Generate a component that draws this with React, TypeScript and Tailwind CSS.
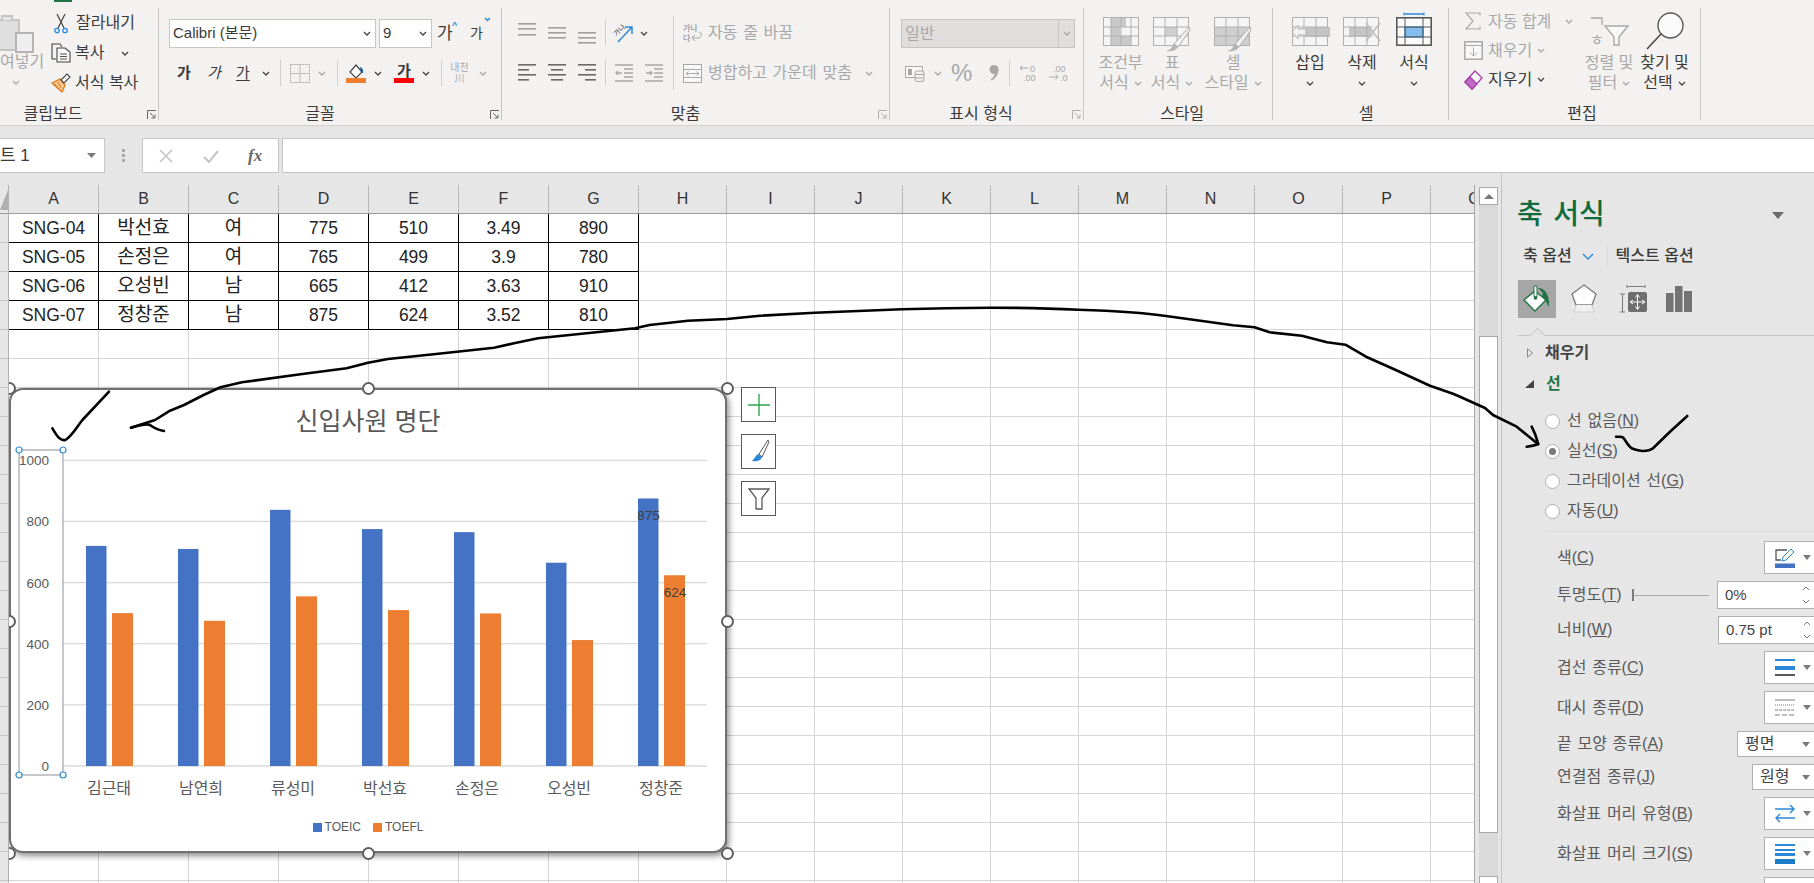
import type { ReactNode } from 'react';

const COLUMNS = ['A', 'B', 'C', 'D', 'E', 'F', 'G', 'H', 'I', 'J', 'K', 'L', 'M', 'N', 'O', 'P', 'Q'];

const TABLE = [
  ['SNG-04', '박선효', '여', '775', '510', '3.49', '890'],
  ['SNG-05', '손정은', '여', '765', '499', '3.9', '780'],
  ['SNG-06', '오성빈', '남', '665', '412', '3.63', '910'],
  ['SNG-07', '정창준', '남', '875', '624', '3.52', '810'],
];

const SCORES = [
  { name: '김근태', toeic: 720, toefl: 500 },
  { name: '남연희', toeic: 710, toefl: 475 },
  { name: '류성미', toeic: 838, toefl: 555 },
  { name: '박선효', toeic: 775, toefl: 510 },
  { name: '손정은', toeic: 765, toefl: 499 },
  { name: '오성빈', toeic: 665, toefl: 412 },
  { name: '정창준', toeic: 875, toefl: 624 },
];

const TICKS = [1000, 800, 600, 400, 200, 0];
const ROW_COUNT = 24;

// ---- small shared bits ----

function Chev({ light }: { light?: boolean }) {
  return (
    <svg viewBox="0 0 8 5" className="w-2 h-[5px] shrink-0">
      <path d="M1 1l3 3 3-3" fill="none" stroke={light ? '#a8a8a8' : '#444444'} strokeWidth="1.3" />
    </svg>
  );
}

function Launcher({ light }: { light?: boolean }) {
  const c = light ? '#b0b0b0' : '#666666';
  return (
    <svg viewBox="0 0 10 10" className="absolute right-[1px] bottom-0 w-[10px] h-[10px]">
      <path d="M.5 9V.5H9" fill="none" stroke={c} />
      <path d="M3 3l5 5M8 4.5V8H4.500" fill="none" stroke={c} />
    </svg>
  );
}

function Group({
  className,
  label,
  launcher,
  lightLauncher,
  labelClassName = '',
  children,
}: {
  className: string;
  label: string;
  launcher?: boolean;
  lightLauncher?: boolean;
  labelClassName?: string;
  children: ReactNode;
}) {
  return (
    <div className={`relative h-[112px] shrink-0 border-r border-[#c8c6c4] ${className}`}>
      <div className="flex h-[95px]">{children}</div>
      <div className={`h-[17px] leading-[22px] text-center text-[16px] text-[#3b3a39] ${labelClassName}`}>{label}</div>
      {launcher && <Launcher light={lightLauncher} />}
    </div>
  );
}

function BigButton({
  icon,
  line1,
  line2,
  className,
  light,
}: {
  icon: ReactNode;
  line1: string;
  line2?: string;
  className: string;
  light?: boolean;
}) {
  return (
    <div className={`flex flex-col items-center pt-[9px] text-[16px] leading-[20px] whitespace-nowrap ${light ? 'text-[#a8a8a8]' : 'text-[#3b3a39]'} ${className}`}>
      <div className="h-[36px] flex justify-center">{icon}</div>
      <div>{line1}</div>
      <div className="h-[20px] flex items-center gap-[5px]">
        {line2 && <span>{line2}</span>}
        <Chev light={light} />
      </div>
    </div>
  );
}

function Lines({ rows, color, className }: { rows: [number, number, number][]; color: string; className: string }) {
  return (
    <svg viewBox="0 0 18 24" className={`w-[18px] h-[24px] shrink-0 ${className}`}>
      {rows.map(([a, b, y]) => (
        <rect key={`${a}-${y}`} x={a} y={y} width={b - a} height="1.6" fill={color} />
      ))}
    </svg>
  );
}

// ---- ribbon icons ----

function PasteIcon() {
  return (
    <svg viewBox="0 0 34 40" className="w-[34px] h-[40px]">
      <rect x="-6" y="7" width="25" height="30" fill="#dedede" stroke="#c4c4c4" strokeWidth="2" />
      <path d="M2 7V3h10v4" fill="#e8e8e8" stroke="#c4c4c4" strokeWidth="2" />
      <rect x="16" y="20" width="17" height="19" fill="#eeeeee" stroke="#b4b4b4" strokeWidth="2" />
    </svg>
  );
}

function ScissorsIcon() {
  return (
    <svg viewBox="0 0 14 21" className="w-[14px] h-[21px] shrink-0">
      <path d="M3 1l7 14M11 1L4 15" stroke="#444444" strokeWidth="1.2" fill="none" />
      <circle cx="3" cy="17.500" r="2.200" fill="none" stroke="#2b88d8" strokeWidth="1.300" />
      <circle cx="11" cy="17.500" r="2.200" fill="none" stroke="#2b88d8" strokeWidth="1.300" />
    </svg>
  );
}

function CopyIcon() {
  return (
    <svg viewBox="0 0 20 20" className="w-5 h-5 shrink-0">
      <path d="M5 16H1V1h8l2 3" fill="none" stroke="#444444" strokeWidth="1.100" />
      <path d="M6 5h8l5 4v10H6z" fill="#f8f8f8" stroke="#444444" strokeWidth="1.100" />
      <path d="M9 11h7M9 13.500h7M9 16h7" stroke="#555555" />
    </svg>
  );
}

function PainterIcon() {
  return (
    <svg viewBox="0 0 20 20" className="w-5 h-5 shrink-0">
      <path d="M1 10l8-4 5 6-3 7z" fill="#f7c58f" stroke="#e07a1f" strokeWidth="1.300" />
      <path d="M4 11l3 5M7 9l3 6" stroke="#e07a1f" />
      <path d="M10 7l6-6 3 3-6 6z" fill="#fff" stroke="#444444" strokeWidth="1.100" />
    </svg>
  );
}

function BordersIcon() {
  return (
    <svg viewBox="0 0 20 19" className="w-5 h-[19px]">
      <rect x=".5" y=".5" width="19" height="18" fill="none" stroke="#a8a8a8" strokeDasharray="2 1" />
      <path d="M10 0v19M0 9.500h20" stroke="#bcbcbc" />
    </svg>
  );
}

function FillIcon() {
  return (
    <svg viewBox="0 0 20 19" className="w-5 h-[19px]">
      <path d="M10 1l6 7-6 6-6-6z" fill="#fff" stroke="#444444" strokeWidth="1.200" />
      <path d="M14 3c3 1 3.500 4 3 6l-2-1" fill="#0f5c9e" />
      <rect x="0" y="14" width="20" height="5" fill="#ed7d31" />
    </svg>
  );
}

function CondIcon() {
  return (
    <svg viewBox="0 0 36 29" className="w-[36px] h-[29px]">
      <rect x=".5" y=".5" width="35" height="28" fill="#f5f5f5" stroke="#b0b0b0" />
      <rect x="8" y="1" width="15" height="9" fill="#c9c9c9" />
      <rect x="8" y="10" width="9" height="9" fill="#c9c9c9" />
      <rect x="8" y="19" width="20" height="9" fill="#c9c9c9" />
      <path d="M8 0v29M18 0v29M28 0v29M0 10h36M0 19h36" stroke="#b0b0b0" />
    </svg>
  );
}

function TableIcon({ body }: { body?: boolean }) {
  return (
    <svg viewBox="0 0 38 40" className="w-[38px] h-[40px]">
      <rect x=".5" y=".5" width="35" height="28" fill="#f5f5f5" stroke="#b0b0b0" />
      {body ? (
        <rect x="1" y="10" width="34" height="18" fill="#cfcfcf" />
      ) : (
        <rect x="12" y="10" width="12" height="9" fill="#cfcfcf" />
      )}
      <path d="M12 0v29M24 0v29M0 10h36M0 19h36" stroke="#b0b0b0" />
      <path d="M36 10L21 27l4 3 12-17z" fill="#f3f2f1" stroke="#a8a8a8" />
      <path d="M20 27c-1 4-3 6-7 7 4 1 10 0 12-4z" fill="#b4b4b4" />
    </svg>
  );
}

function InsertIcon() {
  return (
    <svg viewBox="0 0 40 29" className="w-[40px] h-[29px]">
      <rect x="2.500" y=".5" width="35" height="28" fill="#f5f5f5" stroke="#b0b0b0" />
      <rect x="16" y="10" width="24" height="10" fill="#c4c4c4" />
      <path d="M14 0v29M26 0v29M2 10h36M2 19h36" stroke="#b0b0b0" />
      <path d="M8 8l-6 7 6 7v-4h8v-6H8z" fill="#f3f2f1" stroke="#b0b0b0" />
    </svg>
  );
}

function DeleteIcon() {
  return (
    <svg viewBox="0 0 38 29" className="w-[38px] h-[29px]">
      <rect x=".5" y=".5" width="35" height="28" fill="#f5f5f5" stroke="#b0b0b0" />
      <rect x="6" y="10" width="22" height="10" fill="#c4c4c4" />
      <path d="M12 0v29M24 0v29M0 10h30M0 19h30" stroke="#b0b0b0" />
      <path d="M23 6l14 18M37 6L23 24" stroke="#bdbdbd" strokeWidth="1.600" />
    </svg>
  );
}

function FormatIcon() {
  return (
    <svg viewBox="0 0 36 34" className="w-[36px] h-[34px] -mt-[5px]">
      <path d="M8 2h20" stroke="#2b88d8" strokeWidth="1.500" />
      <path d="M8 .5v3M28 .5v3" stroke="#2b88d8" />
      <rect x=".8" y="5.800" width="34.400" height="27.400" fill="#fbfbfb" stroke="#595959" strokeWidth="1.600" />
      <rect x="9" y="15" width="18" height="10" fill="#83bdec" stroke="#106ebe" />
      <path d="M9 5v28M27 5v28M0 15h36M0 25h36" stroke="#595959" />
    </svg>
  );
}

function SortIcon() {
  return (
    <svg viewBox="0 0 38 30" className="w-[38px] h-[30px] -mt-px overflow-visible">
      <path d="M1 2h11v7" fill="none" stroke="#a8a8a8" strokeWidth="1.300" />
      <text x="0" y="29" className="text-[15px] fill-[#a8a8a8]">ㅎ</text>
      <path d="M15 10h23l-9 11v8h-5v-8z" fill="#f8f8f8" stroke="#a8a8a8" strokeWidth="1.400" />
    </svg>
  );
}

function FindIcon() {
  return (
    <svg viewBox="0 0 38 38" className="w-[38px] h-[38px] -mt-[5px]">
      <circle cx="24.500" cy="13.500" r="12.500" fill="#fbfbfb" stroke="#595959" strokeWidth="1.400" />
      <path d="M15 22L1 37" stroke="#444444" strokeWidth="1.500" />
    </svg>
  );
}

function StrokePen({ d, w, h, className = '' }: { d: string; w: number; h: number; className?: string }) {
  return (
    <svg viewBox={`0 0 ${w} ${h}`} width={w} height={h} className={`shrink-0 ${className}`}>
      <path d={d} fill="none" stroke="#a8a8a8" strokeWidth="1.200" />
    </svg>
  );
}

// ---- ribbon ----

function Ribbon() {
  return (
    <div className="relative h-[126px] shrink-0 bg-[#f3f2f1] border-b border-[#d2d0ce] pt-[8px] flex">
      <div className="absolute left-[54px] top-0 w-[18px] h-[2px] bg-[#217346]" />

      <Group className="-ml-[32px] w-[191px]" label="클립보드" launcher labelClassName="pr-[20px]">
        <div className="w-[86px] flex flex-col items-start pt-[5px] pl-[32px] text-[16px] text-[#a8a8a8] leading-[20px]">
          <div className="h-[40px]"><PasteIcon /></div>
          <div className="-mt-px whitespace-nowrap">여넣기</div>
          <div className="h-[20px] ml-[12px] flex items-center"><Chev light /></div>
        </div>
        <div className="flex flex-col text-[16px] text-[#3b3a39] ml-[-3px]">
          <div className="h-[30px] flex items-center gap-[8px] pl-[3px]"><ScissorsIcon />잘라내기</div>
          <div className="h-[30px] flex items-center gap-[4px]"><CopyIcon />복사<span className="ml-[13px]"><Chev /></span></div>
          <div className="h-[30px] flex items-center gap-[4px]"><PainterIcon />서식 복사</div>
        </div>
      </Group>

      <Group className="w-[343px] pl-[10px]" label="글꼴" launcher labelClassName="pr-[30px]">
        <div className="flex flex-col">
          <div className="mt-[11px] h-[29px] flex items-center text-[#3b3a39] text-[15px]">
            <div className="w-[207px] h-full bg-white border border-[#c8c6c4] flex items-center justify-between pl-[3px] pr-[4px]">
              Calibri (본문)<Chev />
            </div>
            <div className="ml-[3px] w-[53px] h-full bg-white border border-[#c8c6c4] flex items-center justify-between pl-[3px] pr-[4px]">
              9<Chev />
            </div>
            <div className="relative ml-[5px] w-[22px] text-[17px]">
              가<span className="absolute left-[15px] -top-[2px] text-[9px] font-bold text-[#2b88d8]">^</span>
            </div>
            <div className="relative ml-[11px] w-[20px] text-[14px]">
              가<span className="absolute left-[14px] -top-[6px]"><svg viewBox="0 0 7 5" className="w-[7px] h-[5px]"><path d="M1 1l2.500 2.500L6 1" fill="none" stroke="#2b88d8" strokeWidth="1.400" /></svg></span>
            </div>
          </div>
          <div className="mt-[12px] h-[26px] flex items-center text-[15px] text-[#3b3a39]">
            <span className="ml-[8px] w-[15px] font-bold">가</span>
            <span className="ml-[15px] w-[15px] italic">가</span>
            <span className="ml-[14px] w-[15px] underline underline-offset-2">가</span>
            <span className="ml-[11px]"><Chev /></span>
            <span className="ml-[10px] w-px h-[26px] bg-[#d2d0ce]" />
            <span className="ml-[9px]"><BordersIcon /></span>
            <span className="ml-[8px]"><Chev light /></span>
            <span className="ml-[11px] w-px h-[26px] bg-[#d2d0ce]" />
            <span className="ml-[8px]"><FillIcon /></span>
            <span className="ml-[8px]"><Chev /></span>
            <span className="ml-[12px] relative w-5 h-[19px] flex flex-col items-center">
              <span className="font-bold leading-[14px]">가</span>
              <span className="absolute bottom-0 left-0 w-5 h-[5px] bg-[#ff0000]" />
            </span>
            <span className="ml-[8px]"><Chev /></span>
            <span className="ml-[11px] w-px h-[26px] bg-[#d2d0ce]" />
            <span className="ml-[8px] w-[19px] flex flex-col items-center text-[10px] leading-[11px] text-[#a8a8a8]">
              <span>내천</span><span>川</span>
            </span>
            <span className="ml-[10px]"><Chev light /></span>
          </div>
        </div>
      </Group>

      <Group className="w-[388px]" label="맞춤" launcher lightLauncher labelClassName="pr-[20px]">
        <div className="mt-[8px] h-[74px] w-[172px] pl-[16px] pt-[5px] border-r border-[#d2d0ce] flex flex-col gap-[15px]">
          <div className="h-[24px] flex items-center">
            <Lines className="" color="#a0a0a0" rows={[[0, 18, 2], [0, 18, 7], [0, 18, 13]]} />
            <Lines className="ml-[12px]" color="#a0a0a0" rows={[[0, 18, 6], [0, 18, 11], [0, 18, 16]]} />
            <Lines className="ml-[12px]" color="#a0a0a0" rows={[[0, 18, 11], [0, 18, 16], [0, 18, 21]]} />
            <span className="ml-[9px] w-px h-[26px] bg-[#d2d0ce]" />
            <svg viewBox="0 0 22 20" className="ml-[6px] w-[22px] h-5 shrink-0 overflow-visible">
              <text x="1" y="11" transform="rotate(-45 6 8)" className="text-[7px] fill-[#444444]">가나</text>
              <path d="M6 19L20 4M13 4h7v7" fill="none" stroke="#2b88d8" strokeWidth="1.500" />
            </svg>
            <span className="ml-[6px]"><Chev /></span>
          </div>
          <div className="h-[26px] flex items-center">
            <Lines className="" color="#6a6a6a" rows={[[0, 18, 3], [0, 11, 8], [0, 18, 13], [0, 11, 18]]} />
            <Lines className="ml-[12px]" color="#6a6a6a" rows={[[0, 18, 3], [3, 15, 8], [0, 18, 13], [3, 15, 18]]} />
            <Lines className="ml-[12px]" color="#6a6a6a" rows={[[0, 18, 3], [7, 18, 8], [0, 18, 13], [7, 18, 18]]} />
            <span className="ml-[9px] w-px h-[26px] bg-[#d2d0ce]" />
            <svg viewBox="0 0 18 18" className="ml-[9px] w-[18px] h-[18px] shrink-0">
              <path d="M0 1h18M9 5h9M9 9h9M9 13h9M0 17h18M7 9H1M3 7L1 9l2 2" fill="none" stroke="#a8a8a8" strokeWidth="1.300" />
            </svg>
            <svg viewBox="0 0 18 18" className="ml-[12px] w-[18px] h-[18px] shrink-0">
              <path d="M0 1h18M9 5h9M9 9h9M9 13h9M0 17h18M1 9h6M5 7l2 2-2 2" fill="none" stroke="#a8a8a8" strokeWidth="1.300" />
            </svg>
          </div>
        </div>
        <div className="mt-[8px] h-[74px] pl-[9px] pt-[5px] flex flex-col gap-[15px] text-[16px] text-[#a8a8a8] [word-spacing:0.08em]">
          <div className="h-[24px] flex items-center">
            <svg viewBox="0 0 20 20" className="w-5 h-5 shrink-0 overflow-visible">
              <text x="0" y="8" className="text-[8px] fill-[#a8a8a8] font-bold">가나</text>
              <text x="0" y="18" className="text-[8px] fill-[#a8a8a8] font-bold">다</text>
              <path d="M16 9c3 0 3 6 0 6h-6M12 12l-3 3 3 3" fill="none" stroke="#a8a8a8" />
            </svg>
            <span className="ml-[5px]">자동 줄 바꿈</span>
          </div>
          <div className="h-[26px] flex items-center">
            <svg viewBox="0 0 19 19" className="w-[19px] h-[19px] shrink-0">
              <rect x=".5" y=".5" width="18" height="18" fill="#f8f8f8" stroke="#a8a8a8" />
              <path d="M0 5.500h19M0 13.500h19" stroke="#a8a8a8" />
              <path d="M3 9.500h13M5.500 7.500l-2.500 2 2.500 2M13.500 7.500l2.500 2-2.500 2" fill="none" stroke="#a8a8a8" />
            </svg>
            <span className="ml-[6px]">병합하고 가운데 맞춤</span>
            <span className="ml-[13px]"><Chev light /></span>
          </div>
        </div>
      </Group>

      <Group className="w-[194px] pl-[11px]" label="표시 형식" launcher lightLauncher labelClassName="pr-[22px]">
        <div className="flex flex-col">
          <div className="mt-[11px] w-[174px] h-[29px] bg-[#dfdedc] border border-[#c8c6c4] flex items-center text-[16px] text-[#a8a8a8]">
            <span className="flex-1 pl-[3px]">일반</span>
            <span className="w-[16px] h-full border-l border-[#c8c6c4] flex items-center justify-center"><Chev light /></span>
          </div>
          <div className="mt-[12px] h-[26px] flex items-center text-[#a8a8a8]">
            <svg viewBox="0 0 20 17" className="ml-[4px] w-5 h-[17px] shrink-0">
              <rect x=".5" y="1.500" width="17" height="11" fill="#f8f8f8" stroke="#a8a8a8" />
              <rect x="3" y="4" width="4" height="6" fill="#a8a8a8" />
              <rect x="10" y="6" width="9" height="10.500" rx="2" fill="#f3f2f1" stroke="#a8a8a8" />
              <path d="M10 9.500h9M10 13h9" stroke="#a8a8a8" />
            </svg>
            <span className="ml-[9px]"><Chev light /></span>
            <span className="ml-[9px] w-[22px] text-[24px] leading-none">%</span>
            <svg viewBox="0 0 12 18" className="ml-[15px] w-3 h-[18px] shrink-0">
              <circle cx="6" cy="5.500" r="4.500" fill="#a8a8a8" />
              <path d="M10.500 5.500c0 5-3 9-7 11l-.7-1.300c2.500-1.700 4-4 4.200-6z" fill="#a8a8a8" />
            </svg>
            <span className="ml-[9px] w-px h-[26px] bg-[#d2d0ce]" />
            <svg viewBox="0 0 20 20" className="ml-[9px] w-5 h-5 shrink-0 overflow-visible">
              <text x="11" y="9" className="text-[9px] fill-[#a8a8a8]">0</text>
              <text x="4" y="18" className="text-[9px] fill-[#a8a8a8]">.00</text>
              <path d="M9 5H1M3.500 2.500L1 5l2.500 2.500" fill="none" stroke="#a8a8a8" />
            </svg>
            <svg viewBox="0 0 20 20" className="ml-[10px] w-5 h-5 shrink-0 overflow-visible">
              <text x="4" y="9" className="text-[9px] fill-[#a8a8a8]">.00</text>
              <text x="11" y="18" className="text-[9px] fill-[#a8a8a8]">.0</text>
              <path d="M0 14h9M6.500 11.500L9 14l-2.500 2.500" fill="none" stroke="#a8a8a8" />
            </svg>
          </div>
        </div>
      </Group>

      <Group className="w-[189px] pl-[8px]" label="스타일">
        <BigButton className="w-[57px]" light icon={<CondIcon />} line1="조건부" line2="서식" />
        <BigButton className="w-[46px]" light icon={<TableIcon />} line1="표" line2="서식" />
        <BigButton className="w-[66px] ml-[5px]" light icon={<TableIcon body />} line1="셀" line2="스타일" />
      </Group>

      <Group className="w-[176px] pl-[11px]" label="셀">
        <BigButton className="w-[52px]" icon={<InsertIcon />} line1="삽입" />
        <BigButton className="w-[52px]" icon={<DeleteIcon />} line1="삭제" />
        <BigButton className="w-[52px]" icon={<FormatIcon />} line1="서식" />
      </Group>

      <Group className="w-[252px] pl-[15px]" label="편집">
        <div className="w-[120px] flex flex-col text-[16px] text-[#a8a8a8] -mt-[1px]">
          <div className="h-[29px] flex items-center">
            <StrokePen w={19} h={19} d="M16 3.500V1H2l7 8-7 8h14v-2.500" />
            <span className="ml-[5px]">자동 합계</span>
            <span className="ml-[14px]"><Chev light /></span>
          </div>
          <div className="h-[29px] flex items-center">
            <svg viewBox="0 0 19 19" className="w-[19px] h-[19px] shrink-0">
              <rect x=".8" y=".8" width="17.400" height="17.400" fill="#f8f8f8" stroke="#a8a8a8" strokeWidth="1.500" />
              <path d="M0 4.500h19M9.500 6.500v8.500M6 11.500l3.500 3.500 3.500-3.500" fill="none" stroke="#a8a8a8" />
            </svg>
            <span className="ml-[5px]">채우기</span>
            <span className="ml-[5px]"><Chev light /></span>
          </div>
          <div className="h-[29px] flex items-center text-[#3b3a39]">
            <svg viewBox="0 0 19 20" className="w-[19px] h-5 shrink-0">
              <path d="M1 12L11 1l7 7L8 19z" fill="#fff" stroke="#a63ca8" strokeWidth="1.300" />
              <path d="M1 12l5-5 7 7-5 5z" fill="#c06cc4" stroke="#a63ca8" strokeWidth="1.300" />
            </svg>
            <span className="ml-[5px]">지우기</span>
            <span className="ml-[5px]"><Chev /></span>
          </div>
        </div>
        <BigButton className="w-[50px]" light icon={<SortIcon />} line1="정렬 및" line2="필터" />
        <BigButton className="w-[61px]" icon={<FindIcon />} line1="찾기 및" line2="선택" />
      </Group>
    </div>
  );
}

// ---- formula bar ----

function FormulaBar() {
  return (
    <div className="h-[47px] shrink-0 bg-[#e6e6e6] pt-[12px] flex text-[#3b3a39]">
      <div className="w-[105px] h-[35px] bg-white border border-l-0 border-[#c8c6c4] flex items-center justify-between pr-[8px]">
        <span className="text-[17px] whitespace-nowrap">트 1</span>
        <svg viewBox="0 0 9 5" className="w-[9px] h-[5px]"><path d="M0 0h9L4.500 5z" fill="#7a7a7a" /></svg>
      </div>
      <div className="w-[37px] flex flex-col items-center justify-center gap-[2px]">
        <span className="w-[3px] h-[3px] bg-[#a8a8a8]" />
        <span className="w-[3px] h-[3px] bg-[#a8a8a8]" />
        <span className="w-[3px] h-[3px] bg-[#a8a8a8]" />
      </div>
      <div className="w-[137px] h-[35px] bg-white border border-[#c8c6c4] flex items-center pl-[16px]">
        <svg viewBox="0 0 14 14" className="w-[14px] h-[14px]"><path d="M1 1l12 12M13 1L1 13" stroke="#c4c4c4" strokeWidth="1.600" /></svg>
        <svg viewBox="0 0 16 14" className="ml-[30px] w-4 h-[14px]"><path d="M1 8l5 5L15 2" fill="none" stroke="#c4c4c4" strokeWidth="2" /></svg>
        <span className="ml-[29px] font-['Liberation_Serif',serif] italic font-bold text-[17px] text-[#6a6a6a]">fx</span>
      </div>
      <div className="ml-[3px] flex-1 h-[35px] bg-white border border-r-0 border-[#c8c6c4]" />
    </div>
  );
}

// ---- chart ----

const BAR_SCALE = 0.3057;
const BASELINE = 313;

function ChartPlot() {
  const gridY = (v: number) => BASELINE - v * BAR_SCALE;
  return (
    <svg viewBox="0 0 714 356" className="w-[714px] h-[356px] overflow-visible shrink-0">
      {TICKS.map((t) => (
        <g key={t}>
          <line x1="52" x2="696" y1={gridY(t)} y2={gridY(t)} stroke="#d9d9d9" strokeWidth="1.300" />
          <text x="38" y={gridY(t) + 5} textAnchor="end" className="text-[13.5px] fill-[#595959]">{t}</text>
        </g>
      ))}
      {SCORES.map((s, i) => (
        <g key={s.name}>
          <rect x={75 + i * 92} y={BASELINE - s.toeic * BAR_SCALE} width="20.500" height={s.toeic * BAR_SCALE} fill="#4472c4" />
          <rect x={101 + i * 92} y={BASELINE - s.toefl * BAR_SCALE} width="21" height={s.toefl * BAR_SCALE} fill="#ed7d31" />
          <text x={98 + i * 92} y="341" textAnchor="middle" className="text-[16px] fill-[#595959]">{s.name}</text>
        </g>
      ))}
      <text x="637.500" y="67" textAnchor="middle" className="text-[13.5px] fill-[#404040]">875</text>
      <text x="664" y="144" textAnchor="middle" className="text-[13.5px] fill-[#404040]">624</text>
      <rect x="8" y="-3" width="44" height="325" fill="none" stroke="#a0a4ac" strokeWidth="1.200" />
      {[[8, -3], [52, -3], [8, 322], [52, 322]].map(([cx, cy]) => (
        <circle key={`${cx}-${cy}`} cx={cx} cy={cy} r="3" fill="#fff" stroke="#2b88d8" strokeWidth="1.200" />
      ))}
    </svg>
  );
}

const HANDLES = [
  'left-0 top-0',
  'left-[359px] top-0',
  'left-[718px] top-0',
  'left-0 top-[233px]',
  'left-[718px] top-[233px]',
  'left-0 top-[465px]',
  'left-[359px] top-[465px]',
  'left-[718px] top-[465px]',
];

function Chart() {
  return (
    <div className="absolute left-0 top-[203px] w-[718px] h-[465px]">
      <div className="w-full h-full bg-white rounded-[14px] border-2 border-[#707070] shadow-[2px_3px_6px_rgba(0,0,0,0.45)] flex flex-col">
        <div className="h-[63px] shrink-0 flex items-center justify-center text-[25px] text-[#595959]">신입사원 명단</div>
        <ChartPlot />
        <div className="mt-[9px] h-[18px] flex items-center justify-center text-[12px] text-[#595959]">
          <span className="w-[9px] h-[9px] bg-[#4472c4]" />
          <span className="ml-[3px]">TOEIC</span>
          <span className="ml-[12px] w-[9px] h-[9px] bg-[#ed7d31]" />
          <span className="ml-[3px]">TOEFL</span>
        </div>
      </div>
      {HANDLES.map((pos) => (
        <span key={pos} className={`absolute w-[13px] h-[13px] -ml-[6px] -mt-[6px] rounded-full bg-white border-2 border-[#5f5f5f] ${pos}`} />
      ))}
    </div>
  );
}

function ChartTools() {
  const box = 'w-[35px] h-[35px] bg-white border border-[#595959] flex items-center justify-center';
  return (
    <div className="absolute left-[732px] top-[202px] flex flex-col gap-[12px]">
      <div className={box}>
        <svg viewBox="0 0 22 22" className="w-[22px] h-[22px]"><path d="M11 0v22M0 11h22" stroke="#2fa84f" strokeWidth="1.400" /></svg>
      </div>
      <div className={box}>
        <svg viewBox="0 0 22 26" className="w-[22px] h-[26px]">
          <path d="M20 1l-9 14 3 3L21 3z" fill="#fff" stroke="#595959" />
          <path d="M10 15c-2 1-3 4-6 7 4 1 9 0 10-4z" fill="#2b88d8" />
        </svg>
      </div>
      <div className={box}>
        <svg viewBox="0 0 22 22" className="w-[22px] h-[22px]">
          <path d="M1 1h20l-7 9v11H8V10z" fill="#fff" stroke="#595959" strokeWidth="1.300" />
        </svg>
      </div>
    </div>
  );
}

// ---- sheet ----

function Sheet() {
  return (
    <div className="w-[1475px] shrink-0 flex pt-[12px] h-full">
      <div className="w-[9px] shrink-0 border-r border-[#b0b0b0]">
        <div className="h-[29px] border-b border-[#9b9b9b] flex items-end">
          <svg viewBox="0 0 8 20" className="w-2 h-5 mb-[3px]"><path d="M8 0v20H0z" fill="#b0b0b0" /></svg>
        </div>
        {Array.from({ length: ROW_COUNT }, (_, i) => (
          <div key={i} className="h-[29px] border-b border-[#c4c4c4]" />
        ))}
      </div>
      <div className="relative flex-1 min-w-0 overflow-hidden bg-white border-r border-[#a8a8a8]">
        <div className="flex h-[29px] bg-[#e6e6e6] border-b border-[#9b9b9b] text-[16px] text-[#333333]">
          {COLUMNS.map((c, i) => (
            <div
              key={c}
              className={`shrink-0 flex items-center justify-center border-r border-[#b8b8b8] ${i < 7 ? 'w-[90px]' : 'w-[88px]'}`}
            >
              {c}
            </div>
          ))}
        </div>
        {Array.from({ length: ROW_COUNT }, (_, r) => (
          <div key={r} className="flex h-[29px]">
            {COLUMNS.map((c, i) => {
              const inTable = r < TABLE.length && i < 7;
              const korean = i === 1 || i === 2;
              return (
                <div
                  key={c}
                  className={`shrink-0 flex items-center justify-center text-[#222222] border-r border-b ${korean ? 'text-[19px]' : 'text-[17.5px]'} ${i < 7 ? 'w-[90px]' : 'w-[88px]'} ${inTable ? 'border-black' : 'border-[#d4d4d4]'}`}
                >
                  {inTable ? TABLE[r][i] : null}
                </div>
              );
            })}
          </div>
        ))}
        <Chart />
        <ChartTools />
      </div>
    </div>
  );
}

function ScrollBar() {
  const btn = 'h-[18px] shrink-0 bg-white border border-[#a8a8a8] flex items-center justify-center';
  return (
    <div className="ml-[4px] w-[19px] shrink-0 mt-[14px] bg-[#dadada] flex flex-col">
      <div className={btn}>
        <svg viewBox="0 0 10 5" className="w-[10px] h-[5px]"><path d="M5 0l5 5H0z" fill="#7a7a7a" /></svg>
      </div>
      <div className="h-[131px] shrink-0" />
      <div className="h-[497px] shrink-0 bg-white border border-[#a8a8a8]" />
      <div className="h-[43px] shrink-0" />
      <div className={btn} />
    </div>
  );
}

// ---- format pane ----

function Radio({ label, keyLetter, checked }: { label: string; keyLetter: string; checked?: boolean }) {
  return (
    <div className="h-[30px] flex items-center text-[16px] text-[#595959]">
      <span className="ml-[43px] w-[15px] h-[15px] rounded-full bg-white border border-[#b0b0b0] flex items-center justify-center">
        {checked && <span className="w-[7px] h-[7px] rounded-full bg-[#7a7a7a]" />}
      </span>
      <span className="ml-[7px] [word-spacing:0.08em]">
        {label}(<u>{keyLetter}</u>)
      </span>
    </div>
  );
}

function Label({ text, keyLetter }: { text: string; keyLetter: string }) {
  return (
    <span className="text-[16px] text-[#595959] whitespace-nowrap [word-spacing:0.08em]">
      {text}(<u>{keyLetter}</u>)
    </span>
  );
}

function DownTriangle() {
  return (
    <svg viewBox="0 0 8 5" className="w-2 h-[5px] shrink-0"><path d="M0 0h8L4 5z" fill="#7a7a7a" /></svg>
  );
}

function IconRow({ text, keyLetter, children }: { text?: string; keyLetter?: string; children: ReactNode }) {
  return (
    <div className="h-[33px] flex items-center justify-between">
      {text && keyLetter ? <Label text={text} keyLetter={keyLetter} /> : <span />}
      <div className="w-[57px] h-[33px] bg-white border border-[#b0b0b0] flex items-center pl-[10px] gap-[8px]">
        {children}
        <DownTriangle />
      </div>
    </div>
  );
}

function SelectRow({ text, keyLetter, value, className }: { text: string; keyLetter: string; value: string; className: string }) {
  return (
    <div className="h-[26px] flex items-center justify-between">
      <Label text={text} keyLetter={keyLetter} />
      <div className={`h-[26px] bg-white border border-[#b0b0b0] flex items-center justify-between pl-[7px] pr-[10px] text-[16px] text-[#444444] ${className}`}>
        {value}
        <DownTriangle />
      </div>
    </div>
  );
}

function Spin({ value }: { value: string }) {
  return (
    <div className="w-[103px] h-[28px] bg-white border border-[#b0b0b0] flex items-center justify-between pl-[7px] pr-[9px] text-[15px] text-[#444444] shrink-0">
      {value}
      <svg viewBox="0 0 8 18" className="w-2 h-[18px]">
        <path d="M1 4l3-3 3 3M1 14l3 3 3-3" fill="none" stroke="#7a7a7a" />
      </svg>
    </div>
  );
}

function FormatPane() {
  return (
    <div className="ml-[3px] flex-1 min-w-0 h-full border-l border-[#c4c4c4] overflow-hidden">
      <div className="w-[319px]">
        <div className="ml-[15px] mr-[25px] mt-[22px] h-[40px] flex items-center justify-between">
          <span className="text-[28px] leading-none text-[#0f6b3c] font-medium [word-spacing:0.1em]">축 서식</span>
          <svg viewBox="0 0 12 7" className="mr-[12px] w-3 h-[7px]"><path d="M0 0h12L6 7z" fill="#6a6a6a" /></svg>
        </div>
        <div className="ml-[21px] mt-[9px] h-[24px] flex items-center text-[16px] text-[#3b3a39] font-medium">
          <span>축 옵션</span>
          <svg viewBox="0 0 12 7" className="ml-[10px] w-3 h-[7px]"><path d="M1 1l5 5 5-5" fill="none" stroke="#2b88d8" strokeWidth="1.400" /></svg>
          <span className="ml-[13px] w-px h-[22px] bg-[#d8d8d8]" />
          <span className="ml-[8px]">텍스트 옵션</span>
        </div>
        <div className="ml-[16px] mt-[12px] h-[38px] flex items-center">
          <div className="w-[38px] h-[38px] bg-[#a6a6a6] flex items-center justify-center">
            <svg viewBox="0 0 30 30" className="w-[30px] h-[30px]">
              <path d="M13 7l11 9-11 11L2 16z" fill="#fff" stroke="#217346" strokeWidth="1.400" />
              <path d="M12 2h3v11h-3z" fill="#fff" stroke="#217346" strokeWidth="1" />
              <circle cx="13.500" cy="14" r="1.800" fill="#217346" />
              <path d="M16 4c7 0 12 7 11 19-1.500-3-3-5-4-7l-3-4 1-3z" fill="#217346" />
            </svg>
          </div>
          <svg viewBox="0 0 26 30" className="ml-[15px] w-[26px] h-[30px]">
            <path d="M13 1l12 9-4 11H5L1 10z" fill="#fff" stroke="#7a7a7a" strokeWidth="1.300" />
            <path d="M5 21l-2 7h20l-2-7" fill="#f0f0f0" stroke="#d0d0d0" />
          </svg>
          <svg viewBox="0 0 28 28" className="ml-[22px] w-7 h-7">
            <path d="M8 1.500h18M8 0v3M26 0v3M1 9h5M3.500 9v18M1 27h5" fill="none" stroke="#7a7a7a" />
            <rect x="9" y="7" width="19" height="20" rx="2" fill="#6e6e6e" />
            <path d="M11.500 17h14M18.500 10v14" stroke="#fff" />
            <path d="M14 15l-3 2 3 2M23 15l3 2-3 2M16.500 12.500l2-3 2 3M16.500 21.500l2 3 2-3" fill="none" stroke="#fff" />
          </svg>
          <svg viewBox="0 0 26 26" className="ml-[19px] w-[26px] h-[26px]">
            <rect x="0" y="7" width="7.500" height="19" fill="#737373" />
            <rect x="9" y="0" width="7.500" height="26" fill="#737373" />
            <rect x="18" y="5" width="8" height="21" fill="#737373" />
          </svg>
        </div>
        <div className="relative ml-[15px] mt-[17px] h-px bg-[#c8c8c8]">
          <span className="absolute left-[15px] -top-[5px] w-[11px] h-[11px] rotate-45 bg-[#e6e6e6] border-l border-t border-[#c8c8c8]" />
        </div>
        <div className="ml-[25px] mt-[7px] h-[20px] flex items-center text-[16px] font-bold text-[#444444]">
          <svg viewBox="0 0 6 10" className="w-[6px] h-[10px]"><path d="M.5.8l5 4.200-5 4.200z" fill="none" stroke="#8a8a8a" /></svg>
          <span className="ml-[12px]">채우기</span>
        </div>
        <div className="ml-[23px] mt-[11px] h-[20px] flex items-center text-[16px] font-bold text-[#217346]">
          <svg viewBox="0 0 9 8" className="w-[9px] h-2"><path d="M9 0v8H0z" fill="#444444" /></svg>
          <span className="ml-[12px]">선</span>
        </div>
        <div className="mt-[12px] w-full">
          <Radio label="선 없음" keyLetter="N" />
          <Radio label="실선" keyLetter="S" checked />
          <Radio label="그라데이션 선" keyLetter="G" />
          <Radio label="자동" keyLetter="U" />
        </div>
        <div className="ml-[43px] mt-[5px] h-px bg-[#dcdcdc]" />
        <div className="ml-[55px] mt-[9px] flex flex-col gap-[7px]">
          <IconRow text="색" keyLetter="C">
            <svg viewBox="0 0 20 20" className="w-5 h-5 shrink-0">
              <path d="M12 2H1v10h5" fill="none" stroke="#555555" strokeWidth="1.300" />
              <path d="M7 13l1-4 8-8 3 3-8 8z" fill="#fff" stroke="#2b88d8" />
              <rect x="0" y="15.500" width="20" height="4.500" fill="#4472c4" />
            </svg>
          </IconRow>
          <div className="h-[28px] flex items-center">
            <div className="w-[75px]"><Label text="투명도" keyLetter="T" /></div>
            <div className="w-[77px] h-[12px] flex items-center">
              <span className="w-[2px] h-[12px] bg-[#7a7a7a]" />
              <span className="flex-1 h-px bg-[#a8a8a8]" />
            </div>
            <div className="ml-[8px]"><Spin value="0%" /></div>
          </div>
          <div className="h-[28px] flex items-center justify-between">
            <Label text="너비" keyLetter="W" />
            <Spin value="0.75 pt" />
          </div>
          <IconRow text="겹선 종류" keyLetter="C">
            <svg viewBox="0 0 20 18" className="w-5 h-[18px] shrink-0">
              <rect y="0" width="20" height="2" fill="#2b88d8" />
              <rect y="7" width="20" height="4" fill="#2b88d8" />
              <rect y="15" width="20" height="2" fill="#595959" />
            </svg>
          </IconRow>
          <IconRow text="대시 종류" keyLetter="D">
            <svg viewBox="0 0 20 18" className="w-5 h-[18px] shrink-0">
              <path d="M0 1h20" stroke="#7a7a7a" />
              <path d="M0 6h20" stroke="#7a7a7a" strokeDasharray="1 1" />
              <path d="M0 11h20" stroke="#7a7a7a" strokeDasharray="3 1" />
              <path d="M0 16h20" stroke="#7a7a7a" strokeDasharray="5 2" />
            </svg>
          </IconRow>
          <SelectRow text="끝 모양 종류" keyLetter="A" value="평면" className="w-[84px]" />
          <SelectRow text="연결점 종류" keyLetter="J" value="원형" className="w-[69px]" />
          <IconRow text="화살표 머리 유형" keyLetter="B">
            <svg viewBox="0 0 20 20" className="w-5 h-5 shrink-0">
              <path d="M0 5h19M15 1l4 4-4 4M20 14H1M5 10l-4 4 4 4" fill="none" stroke="#2b88d8" strokeWidth="1.400" />
            </svg>
          </IconRow>
          <IconRow text="화살표 머리 크기" keyLetter="S">
            <svg viewBox="0 0 20 20" className="w-5 h-5 shrink-0">
              <rect y="0" width="20" height="2" fill="#2b88d8" />
              <rect y="5" width="20" height="2" fill="#2b88d8" />
              <rect y="9" width="20" height="3" fill="#2b88d8" />
              <rect y="15" width="20" height="5" fill="#1c7cc7" />
            </svg>
          </IconRow>
          <IconRow>
            <span className="w-5" />
          </IconRow>
        </div>
      </div>
    </div>
  );
}

// ---- pen annotations drawn over the screenshot ----

function InkStrokes() {
  return (
    <svg viewBox="0 0 1814 883" className="absolute inset-0 w-[1814px] h-[883px] pointer-events-none">
      <g fill="none" stroke="#000000" strokeWidth="2.600" strokeLinecap="round" strokeLinejoin="round">
        <path d="M1538 444L1516.700 426.700L1493 415L1485 408L1460 396.700L1453 393.700L1430 385.700L1393.600 369L1366 356.700L1345.400 344.700L1327 342.300L1301.800 335.700L1269.600 332.300L1254.500 327.300L1233 325.300L1166 316C1140 312 1105 310.500 1078.600 309.700C1050 308.300 1020 307.700 990.500 307.700C960 307.700 930 308.300 902 309.300C870 310.500 840 311.500 814.600 312.700L760 315.700L727 319L688 320.700L649.500 325L635 328.300L601 331.700L538 338.300L514 343.300L494 347.700L436 354L388 359L368 362.700L346.600 368.300L300.500 374.300L242 382.300L220.500 387.300L203.600 395L184 405L170 410.700L155 420L131 427.700" />
        <path d="M131 427.700C140 425 146 423 150 425C154 428 158 430 164 431" />
        <path d="M1531.700 426.700C1535 433 1537 439 1538.300 444C1535 445.500 1531 446.300 1526.700 446.700" />
        <path d="M109 391.700L82.400 420C76 428 72 436 65.400 440C61 441 58 438 52.400 428.300" />
        <path d="M1616 436.700C1620 437 1622 436.500 1623.300 437.700C1626 441 1628 446 1631.700 448.300C1636 450 1640 451 1643 451C1648 451 1651 450 1653 448.300L1670 431.700L1687.300 416" />
      </g>
    </svg>
  );
}

export default function App() {
  return (
    <div className="relative w-[1814px] h-[883px] overflow-hidden bg-[#e6e6e6] flex flex-col font-['Liberation_Sans','Noto_Sans_CJK_KR',sans-serif]">
      <Ribbon />
      <FormulaBar />
      <div className="flex-1 min-h-0 flex">
        <Sheet />
        <ScrollBar />
        <FormatPane />
      </div>
      <InkStrokes />
    </div>
  );
}
